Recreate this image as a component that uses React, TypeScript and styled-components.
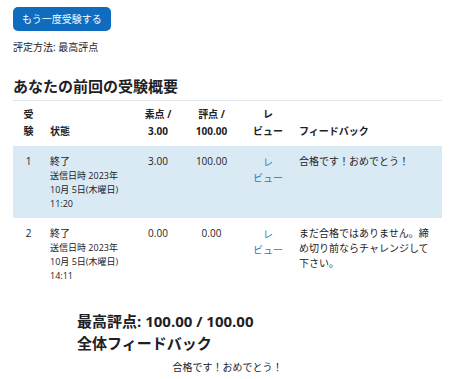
import * as React from 'react';
import styled, { createGlobalStyle } from 'styled-components';

type Attempt = {
    id: number;
    state: string;
    submitted: string[];
    marks: string;
    grade: string;
    feedback: string;
    isBest: boolean;
};

const attempts: Attempt[] = [
    {
        id: 1,
        state: '終了',
        submitted: ['送信日時 2023年', '10月 5日(木曜日)', '11:20'],
        marks: '3.00',
        grade: '100.00',
        feedback: '合格です！おめでとう！',
        isBest: true,
    },
    {
        id: 2,
        state: '終了',
        submitted: ['送信日時 2023年', '10月 5日(木曜日)', '14:11'],
        marks: '0.00',
        grade: '0.00',
        feedback: 'まだ合格ではありません。締め切り前ならチャレンジして下さい。',
        isBest: false,
    },
];

const GlobalStyle = createGlobalStyle`
    html, body {
        margin: 0;
        padding: 0;
        background: #fff;
    }
    body {
        font-family: 'Open Sans', 'Noto Sans CJK JP', sans-serif;
        color: #1d2125;
    }
`;

const Page = styled.div`
    padding: 7px 8px 0 13px;
    width: 450px;
    box-sizing: border-box;
`;

const RetryButton = styled.button`
    display: block;
    height: 24px;
    padding: 0 9px;
    border: none;
    border-radius: 5px;
    background-color: #0f6cbf;
    color: #fff;
    font-family: inherit;
    font-size: 10px;
    line-height: 24px;
    cursor: pointer;
`;

const GradingMethod = styled.p`
    margin: 9px 0 0;
    font-size: 10px;
    line-height: 15px;
`;

const SummaryHeading = styled.h3`
    margin: 21px 0 4px;
    font-size: 15px;
    line-height: 20px;
    font-weight: 700;
`;

const Table = styled.table`
    width: 100%;
    border-collapse: collapse;
    table-layout: fixed;
    border-top: 1px solid #e4e7ea;
`;

const HeadCell = styled.th<{ $align?: 'left' | 'center' }>`
    padding: 5px 6px 6px;
    font-size: 10px;
    line-height: 17px;
    font-weight: 700;
    text-align: ${(p) => p.$align || 'left'};
    vertical-align: bottom;
`;

const Row = styled.tr<{ $best: boolean }>`
    background-color: ${(p) => (p.$best ? '#d9eaf5' : 'transparent')};
`;

const Cell = styled.td<{ $align?: 'left' | 'center' }>`
    padding: 8px 6px 7px;
    font-size: 10px;
    line-height: 15px;
    text-align: ${(p) => p.$align || 'left'};
    vertical-align: top;
`;

const SubmittedLine = styled.div`
    font-size: 9px;
    line-height: 14px;
`;

const ReviewLink = styled.a`
    color: #2a7bc4;
    text-decoration: none;
    line-height: 16px;
    display: inline-block;
`;

const Result = styled.div`
    margin: 20px 0 0 64px;
`;

const ResultHeading = styled.h3`
    margin: 0;
    font-size: 15px;
    line-height: 22px;
    font-weight: 700;
`;

const OverallFeedback = styled.div`
    margin: 6px 0 0;
    font-size: 10px;
    line-height: 15px;
    text-align: center;
`;

const App: React.FC = () => {
    return (
        <>
            <GlobalStyle />
            <Page>
                <RetryButton type="button">もう一度受験する</RetryButton>
                <GradingMethod>評定方法: 最高評点</GradingMethod>
                <SummaryHeading>あなたの前回の受験概要</SummaryHeading>
                <Table>
                    <colgroup>
                        <col style={{ width: 31 }} />
                        <col style={{ width: 92 }} />
                        <col style={{ width: 44 }} />
                        <col style={{ width: 63 }} />
                        <col style={{ width: 50 }} />
                        <col />
                    </colgroup>
                    <thead>
                        <tr>
                            <HeadCell $align="center">
                                受<br />験
                            </HeadCell>
                            <HeadCell>状態</HeadCell>
                            <HeadCell $align="center">
                                素点 /<br />3.00
                            </HeadCell>
                            <HeadCell $align="center">
                                評点 /<br />100.00
                            </HeadCell>
                            <HeadCell $align="center">
                                レ<br />ビュー
                            </HeadCell>
                            <HeadCell>フィードバック</HeadCell>
                        </tr>
                    </thead>
                    <tbody>
                        {attempts.map((a) => (
                            <Row key={a.id} $best={a.isBest}>
                                <Cell $align="center">{a.id}</Cell>
                                <Cell>
                                    {a.state}
                                    {a.submitted.map((line) => (
                                        <SubmittedLine key={line}>{line}</SubmittedLine>
                                    ))}
                                </Cell>
                                <Cell $align="center">{a.marks}</Cell>
                                <Cell $align="center">{a.grade}</Cell>
                                <Cell $align="center">
                                    <ReviewLink href="#">
                                        レ<br />ビュー
                                    </ReviewLink>
                                </Cell>
                                <Cell>{a.feedback}</Cell>
                            </Row>
                        ))}
                    </tbody>
                </Table>
                <Result>
                    <ResultHeading>最高評点: 100.00 / 100.00</ResultHeading>
                    <ResultHeading>全体フィードバック</ResultHeading>
                </Result>
                <OverallFeedback>合格です！おめでとう！</OverallFeedback>
            </Page>
        </>
    );
};

export default App;
